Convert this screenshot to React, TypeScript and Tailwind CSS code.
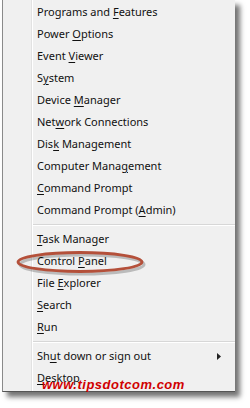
import React from 'react';

type Item = { pre: string; key: string; post: string; arrow?: boolean };

const groups: Item[][] = [
  [
    { pre: 'Programs and ', key: 'F', post: 'eatures' },
    { pre: 'Power ', key: 'O', post: 'ptions' },
    { pre: 'Event ', key: 'V', post: 'iewer' },
    { pre: 'S', key: 'y', post: 'stem' },
    { pre: 'Device ', key: 'M', post: 'anager' },
    { pre: 'Net', key: 'w', post: 'ork Connections' },
    { pre: 'Dis', key: 'k', post: ' Management' },
    { pre: 'Computer Mana', key: 'g', post: 'ement' },
    { pre: '', key: 'C', post: 'ommand Prompt' },
    { pre: 'Command Prompt (', key: 'A', post: 'dmin)' },
  ],
  [
    { pre: '', key: 'T', post: 'ask Manager' },
    { pre: 'Control ', key: 'P', post: 'anel' },
    { pre: 'File ', key: 'E', post: 'xplorer' },
    { pre: '', key: 'S', post: 'earch' },
    { pre: '', key: 'R', post: 'un' },
  ],
  [
    { pre: 'Sh', key: 'u', post: 't down or sign out', arrow: true },
    { pre: '', key: 'D', post: 'esktop' },
  ],
];

function Row({ item }: { item: Item }) {
  return (
    <div className="h-[22px] flex items-center pl-[34px] pr-3 text-[11px] text-[#111]">
      <span className="flex-1 whitespace-nowrap">
        {item.pre}
        <span className="underline underline-offset-2">{item.key}</span>
        {item.post}
      </span>
      {item.arrow && (
        <svg width="4" height="7" viewBox="0 0 4 7" className="mr-[2px]">
          <path d="M0 0 L4 3.5 L0 7 Z" fill="#222" />
        </svg>
      )}
    </div>
  );
}

export default function App() {
  return (
    <div
      className="w-[250px] h-[408px] bg-white relative overflow-hidden"
      style={{ fontFamily: '"Noto Sans", "Open Sans", sans-serif' }}
    >
      <div className="ml-[2px] w-[233px] h-[392px] bg-[#f0f0f0] border-l border-l-[#8a8a8a] border-b border-b-[#555] shadow-[5px_5px_5px_rgba(0,0,0,0.55)] flex">
        {/* icon column with separator */}
        <div className="w-[29px] shrink-0 border-r border-r-[#e2e2e2]" />
        <div className="w-px shrink-0 bg-white" />
        <div className="flex-1 pt-px -ml-[30px]">
          {groups.map((g, gi) => (
            <div key={gi}>
              {gi > 0 && (
                <div className="h-[7px] flex flex-col justify-center pl-[30px]">
                  <div className="h-px bg-[#d7d7d7]" />
                  <div className="h-px bg-white" />
                </div>
              )}
              {g.map((item, i) => (
                <Row key={i} item={item} />
              ))}
            </div>
          ))}
        </div>
      </div>

      {/* red highlight ellipse around Control Panel */}
      <svg className="absolute left-[12px] top-[249px]" width="140" height="30" viewBox="0 0 140 30">
        <ellipse cx="70" cy="15.5" rx="62" ry="9.5" fill="none" stroke="rgba(0,0,0,0.22)" strokeWidth="3" />
        <ellipse cx="68" cy="13" rx="62" ry="9.5" fill="none" stroke="#b4503a" strokeWidth="2.8" />
      </svg>

      {/* watermark */}
      <div className="absolute left-[42px] top-[375px] text-[13px] font-bold italic text-[#d00000] tracking-[0.5px]" style={{ fontFamily: '"Liberation Sans", sans-serif' }}>
        www.tipsdotcom.com
      </div>
    </div>
  );
}
